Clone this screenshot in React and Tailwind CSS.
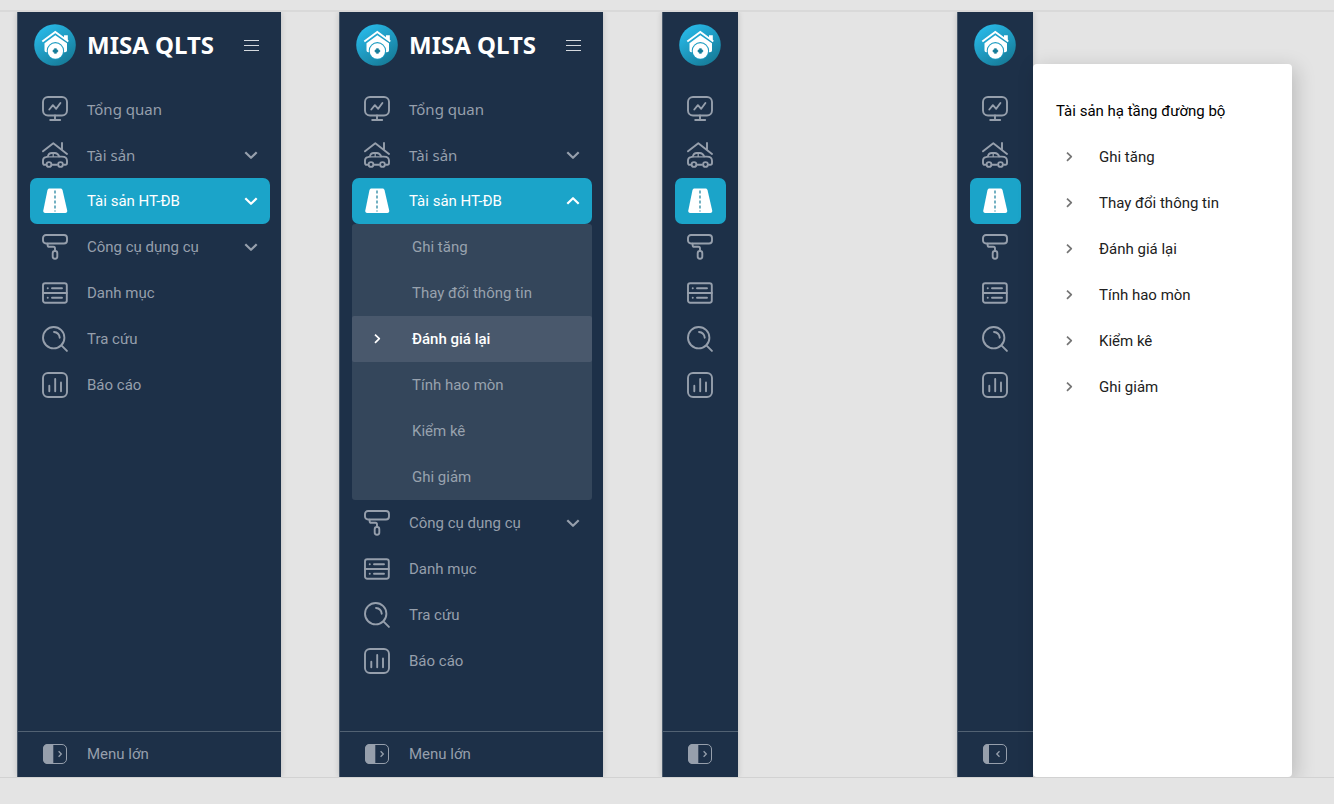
import React from "react";

function Glyph({ children, className = "" }) {
  return (
    <svg
      viewBox="0 0 26 26"
      aria-hidden="true"
      className={`size-[26px] shrink-0 ${className}`}
      fill="none"
      stroke="currentColor"
      strokeWidth="1.9"
      strokeLinecap="round"
      strokeLinejoin="round"
    >
      {children}
    </svg>
  );
}

const icons = {
  overview: (
    <Glyph>
      <rect x="1" y="1" width="24" height="18.5" rx="5" />
      <path d="M13 19.5v4.2M8.2 24h10M7.3 13.5l3.6-4.3 3.3 3.6 4.2-5.8" />
    </Glyph>
  ),
  assets: (
    <Glyph>
      <path d="M1 9.3 11.3 1.2 25 12M20 1v6.5" />
      <path d="M3.5 22.8H2.6C1.6 22.8 1 22 1 21v-2.600c0-1.700 1-2.900 2.800-3.300l2-.5c.6-2.700 1.700-3.600 4-3.600h3.200c2 0 3 1 4.400 3.600h2.500c3 0 5.100 1.300 5.100 4.200V21c0 1.100-.7 1.800-1.600 1.800H22M10.500 22.800h4.300" />
      <path d="M6 14.800h11M11.200 11v3.600" strokeWidth="1.300" />
      <circle cx="7" cy="22.500" r="2.400" />
      <circle cx="18.500" cy="22.500" r="2.400" />
    </Glyph>
  ),
  road: (
    <Glyph>
      <path
        d="M7.500.500h11c1 0 1.700.600 2 1.500l4.700 20.500c.3 1.500-.5 2.500-1.900 2.500H3.200c-1.400 0-2.200-1-1.900-2.500L5.500 2c.3-.9 1-1.500 2-1.500Z"
        fill="currentColor"
        stroke="none"
      />
      <path d="M13 2.500v21" stroke="#167d9a" strokeWidth="1.200" strokeDasharray="3 2" strokeLinecap="butt" />
    </Glyph>
  ),
  roller: (
    <Glyph>
      <rect x="1" y="1" width="24" height="8.500" rx="3" />
      <path d="M5.600 9.700v1.200c0 1.200.7 1.900 1.900 1.900h4c1 0 1.500.600 1.500 1.600V17" />
      <rect x="10.700" y="17" width="4.600" height="7.800" rx="2.200" />
    </Glyph>
  ),
  list: (
    <Glyph>
      <rect x="1" y="3.200" width="23.800" height="19.500" rx="2.200" />
      <path d="M1 13h23.800M10 8.200h10M10 17.700h10M5.700 8.200h.1M5.700 17.700h.1" />
    </Glyph>
  ),
  search: (
    <Glyph>
      <circle cx="11.700" cy="11.700" r="10.700" />
      <path d="m19.400 19.400 5.500 5.500M12 6c3.300.300 5.400 2.500 5.700 5.700" />
    </Glyph>
  ),
  report: (
    <Glyph>
      <rect x="1" y="1" width="24" height="24" rx="5" />
      <path d="M7.300 13.800v5.500M13.200 7v12.300M19 10.400v8.900" />
    </Glyph>
  ),
};

function Chevron({ direction = "down", className = "" }) {
  const paths = {
    down: "m1.300 4.200 5.700 5.600 5.700-5.600",
    up: "m1.300 9.800 5.700-5.600 5.700 5.600",
    right: "m5 2.600 4.300 4.100L5 10.800",
  };
  return (
    <svg
      viewBox="0 0 14 14"
      aria-hidden="true"
      className={`size-[14px] shrink-0 ${className}`}
      fill="none"
      stroke="currentColor"
      strokeWidth={direction === "right" ? "1.700" : "2.200"}
      strokeLinejoin="round"
    >
      <path d={paths[direction]} />
    </svg>
  );
}

function Logo({ id }) {
  return (
    <svg viewBox="0 0 42 42" role="img" aria-label="MISA QLTS" className="size-[42px] shrink-0">
      <defs>
        <linearGradient id={id} x1="0.200" y1="0.050" x2="0.800" y2="0.950">
          <stop offset="0" stopColor="#28b9e8" />
          <stop offset="1" stopColor="#167b98" />
        </linearGradient>
      </defs>
      <circle cx="21" cy="21" r="20.800" fill={`url(#${id})`} />
      <path d="M30 11.300h3.800v6L30 14.600Z" fill="#fff" />
      <path d="M8.300 17.500 21.300 8l13 9.500" fill="none" stroke="#fff" strokeWidth="1.900" />
      <path d="M10.500 19.300 21.300 11.300l11.700 8v7c0 1.300-.8 2-2 2H12.500c-1.300 0-2-.7-2-2Z" fill="#fff" />
      <circle cx="21.400" cy="26.800" r="8.700" fill="#1c9cc2" />
      <circle cx="21.400" cy="27" r="7.700" fill="#fff" />
      <path d="M20.400 24.700h2v1.300h1.300v2h-1.300v1.300h-2V28h-1.300v-2h1.300Z" fill="#167d9a" stroke="#167d9a" strokeWidth=".7" strokeLinejoin="round" />
    </svg>
  );
}

function PanelIcon({ open }) {
  return (
    <svg viewBox="0 0 26 22" aria-hidden="true" className="h-[22px] w-[26px] shrink-0" fill="none" stroke="currentColor">
      <rect x="1.500" y="1.500" width="23" height="19" rx="4.500" />
      <path
        d={
          open
            ? "M7 1H5.500A4.500 4.500 0 0 0 1 5.500v11A4.500 4.500 0 0 0 5.500 21H7Z"
            : "M11.300 1H5.500A4.500 4.500 0 0 0 1 5.500v11A4.500 4.500 0 0 0 5.500 21h5.800Z"
        }
        fill="currentColor"
        stroke="none"
      />
      <path d={open ? "m17.500 8.300-2.700 2.700 2.700 2.700" : "m16.600 8.300 2.700 2.700-2.700 2.700"} strokeWidth="1.300" />
    </svg>
  );
}

const menu = [
  { key: "overview", label: "Tổng quan", humanist: true },
  { key: "assets", label: "Tài sản", humanist: true, expandable: true },
  { key: "road", label: "Tài sản HT-ĐB", active: true, expandable: true },
  { key: "roller", label: "Công cụ dụng cụ", expandable: true },
  { key: "list", label: "Danh mục" },
  { key: "search", label: "Tra cứu" },
  { key: "report", label: "Báo cáo" },
];

const roadItems = ["Ghi tăng", "Thay đổi thông tin", "Đánh giá lại", "Tính hao mòn", "Kiểm kê", "Ghi giảm"];

function MenuRow({ item, compact, expanded }) {
  const Tag = item.expandable ? "button" : "a";
  const props = item.expandable ? { type: "button", "aria-expanded": expanded } : { href: `#${item.key}` };
  return (
    <Tag
      {...props}
      aria-label={compact ? item.label : undefined}
      className={`flex h-[46px] w-full items-center gap-[19px] rounded-[7px] px-3 text-left ${
        item.active ? "bg-[#1ba4c9] text-white" : "text-[#969fac]"
      }`}
    >
      {icons[item.key]}
      {!compact && (
        <span className={`grow whitespace-nowrap ${item.humanist ? "font-['Noto_Sans',sans-serif]" : ""}`}>{item.label}</span>
      )}
      {!compact && item.expandable && <Chevron direction={expanded ? "up" : "down"} />}
    </Tag>
  );
}

function SubMenu() {
  return (
    <ul className="rounded-[3px] bg-[#34465b]">
      {roadItems.map((label) => {
        const current = label === "Đánh giá lại";
        return (
          <li key={label}>
            <a
              href="#road"
              aria-current={current ? "page" : undefined}
              className={`flex h-[46px] items-center rounded-[2px] pl-[18px] ${
                current ? "bg-[#49586c] font-medium text-white" : "text-[#98a2ae]"
              }`}
            >
              <span className="w-[42px]">{current && <Chevron direction="right" />}</span>
              {label}
            </a>
          </li>
        );
      })}
    </ul>
  );
}

function Sidebar({ id, compact = false, expanded = false, flyout = false }) {
  return (
    <nav
      aria-label="Menu"
      className={`flex shrink-0 flex-col border-l border-[#4b5b6d] bg-[#1d3048] shadow-[0_0_6px_rgba(0,0,0,0.160)] ${
        compact ? "w-[76px]" : "w-[264px]"
      }`}
    >
      <header className={`flex h-[74px] items-start pt-3 pl-4 ${compact ? "" : "pr-[22px]"}`}>
        <div className="flex h-[42px] w-full items-center gap-[11px]">
          <Logo id={`${id}-logo`} />
          {!compact && (
            <>
              <h1 className="grow whitespace-nowrap font-['Noto_Sans',sans-serif] text-2xl font-bold text-white">MISA QLTS</h1>
              <button type="button" aria-label="Menu" className="flex w-[15px] flex-col gap-1">
                <span className="h-px bg-[#d5d9de]" />
                <span className="h-px bg-[#d5d9de]" />
                <span className="h-px bg-[#d5d9de]" />
              </button>
            </>
          )}
        </div>
      </header>
      <ul className={`grow pl-3 ${compact ? "pr-3" : "pr-[11px]"}`}>
        {menu.map((item) => (
          <li key={item.key}>
            <MenuRow item={item} compact={compact} expanded={item.active ? expanded || flyout : false} />
            {item.active && expanded && <SubMenu />}
          </li>
        ))}
      </ul>
      <button
        type="button"
        aria-label={compact ? "Menu lớn" : undefined}
        className="flex h-[46px] items-center gap-[19px] border-t border-[#526273] pb-px pl-6 text-left text-[#969fac]"
      >
        <PanelIcon open={flyout} />
        {!compact && <span>Menu lớn</span>}
      </button>
    </nav>
  );
}

function Flyout() {
  return (
    <section className="mt-[52px] w-[259px] rounded-[4px] bg-white px-[23px] pt-6 text-[#212121] shadow-[4px_4px_20px_rgba(0,0,0,0.180)]">
      <h2 className="flex h-[46px] items-center text-black">Tài sản hạ tầng đường bộ</h2>
      <ul>
        {roadItems.map((label) => (
          <li key={label}>
            <a href="#road" className="flex h-[46px] items-center gap-[23px] pl-[6px]">
              <Chevron direction="right" className="text-[#757575]" />
              {label}
            </a>
          </li>
        ))}
      </ul>
    </section>
  );
}

export default function App() {
  return (
    <div className="flex min-h-screen flex-col bg-[#e4e4e4] font-[Roboto,sans-serif] text-[15px] leading-5">
      <div className="h-3 border-b-2 border-[#d9d9d9]" />
      <main className="flex grow gap-[59px] overflow-hidden pr-[42px] pl-[17px]">
        <div className="flex gap-[58px]">
          <Sidebar id="closed" />
          <Sidebar id="opened" expanded />
        </div>
        <Sidebar id="compact" compact />
        <div className="ml-auto flex">
          <Sidebar id="flyout" compact flyout />
          <Flyout />
        </div>
      </main>
      <div className="h-[27px] border-t border-[#d2d2d2]" />
    </div>
  );
}
